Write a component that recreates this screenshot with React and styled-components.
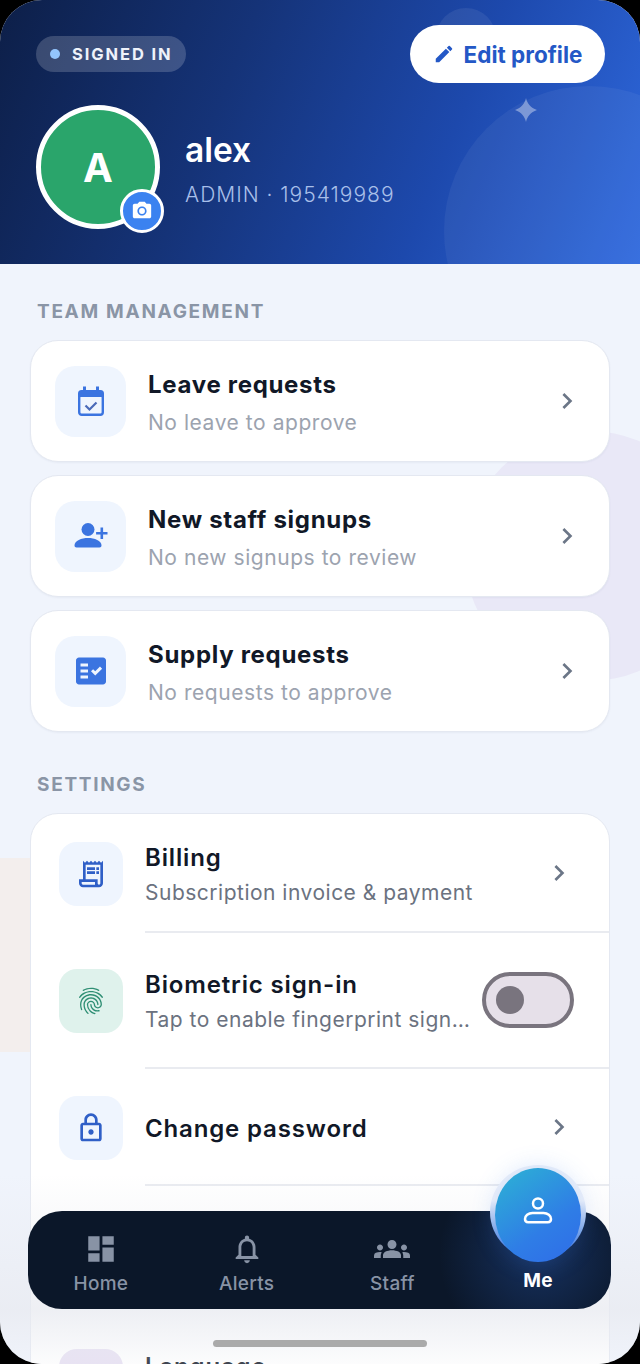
import React from 'react'
import styled, { createGlobalStyle } from 'styled-components'
import {
  MdEdit,
  MdPhotoCamera,
  MdFactCheck,
  MdOutlineReceiptLong,
  MdFingerprint,
  MdOutlineLock,
  MdChevronRight,
  MdDashboard,
  MdOutlineNotifications,
  MdGroups,
} from 'react-icons/md'

const GlobalStyle = createGlobalStyle`
  html, body {
    margin: 0;
    padding: 0;
    background: #000;
  }
  * {
    box-sizing: border-box;
  }
`

const CalendarCheck = () => (
  <svg width="34" height="34" viewBox="0 0 34 34" fill="none">
    <path fill="currentColor" d="M9 2.500h3V6h10V2.500h3V6h1.500A3.500 3.500 0 0 1 30 9.500V13H4V9.500A3.500 3.500 0 0 1 7.500 6H9z" />
    <rect x="5.200" y="11" width="23.600" height="19.800" rx="2.500" stroke="currentColor" strokeWidth="2.400" />
    <path d="M11.500 21.500l4 4 7-7" stroke="#4a6ab8" strokeWidth="2.200" />
  </svg>
)

const PersonAdd = () => (
  <svg width="36" height="36" viewBox="0 0 36 36" fill="currentColor">
    <circle cx="15" cy="11.5" r="6.5" />
    <path d="M1.5 27.5c0-5 7-7.5 13.5-7.5s13.5 2.500 13.500 7.500c0 1.200-.8 2-2 2h-23c-1.200 0-2-.8-2-2z" />
    <path d="M27.500 9.500h2.600v4.400h4.400v2.600h-4.400v4.400h-2.600v-4.400h-4.400v-2.600h4.400z" />
  </svg>
)

const PersonLine = () => (
  <svg width="34" height="34" viewBox="0 0 34 34" fill="none" stroke="currentColor" strokeWidth="2.500">
    <circle cx="17" cy="9.500" r="5" />
    <path d="M11.500 19h11c4.200 0 7.500 2.800 7.500 6 0 2-1.300 3.200-3.200 3.200H7.200C5.300 28.200 4 27 4 25c0-3.200 3.300-6 7.500-6z" />
  </svg>
)

const Sparkle = () => (
  <svg width="24" height="24" viewBox="0 0 24 24" fill="currentColor">
    <path d="M12 0c1.500 6 4.500 9.500 11 12-6.500 2.500-9.500 6-11 12-1.500-6-4.500-9.500-11-12 6.500-2.500 9.500-6 11-12z" />
  </svg>
)

const team = [
  { title: 'Leave requests', sub: 'No leave to approve', icon: <CalendarCheck /> },
  { title: 'New staff signups', sub: 'No new signups to review', icon: <PersonAdd /> },
  { title: 'Supply requests', sub: 'No requests to approve', icon: <MdFactCheck size={36} /> },
]

const App = () => {
  return (
    <Screen>
      <GlobalStyle />
      <Header>
        <HeaderBubble />
        <HeaderDot />
        <HeaderStar><Sparkle /></HeaderStar>
        <TopRow>
          <StatusPill><StatusDot />SIGNED IN</StatusPill>
          <EditButton><MdEdit size={22} />Edit profile</EditButton>
        </TopRow>
        <ProfileRow>
          <Avatar>
            A
            <CameraBadge><MdPhotoCamera size={22} /></CameraBadge>
          </Avatar>
          <ProfileText>
            <ProfileName>alex</ProfileName>
            <ProfileMeta>ADMIN · 195419989</ProfileMeta>
          </ProfileText>
        </ProfileRow>
      </Header>

      <Body>
        <BlobRight />
        <BlobLeft />
        <SectionLabel>TEAM MANAGEMENT</SectionLabel>
        <CardList>
          {team.map((item) => (
            <TeamCard key={item.title}>
              <TeamIcon>{item.icon}</TeamIcon>
              <TeamText>
                <TeamTitle>{item.title}</TeamTitle>
                <TeamSub>{item.sub}</TeamSub>
              </TeamText>
              <Chevron><MdChevronRight size={32} /></Chevron>
            </TeamCard>
          ))}
        </CardList>

        <SectionLabel $settings>SETTINGS</SectionLabel>
        <SettingsCard>
          <SettingsRow $height={119}>
            <SettingsIcon><MdOutlineReceiptLong size={32} /></SettingsIcon>
            <RowBody>
              <RowText>
                <RowTitle>Billing</RowTitle>
                <SettingsSub>Subscription invoice &amp; payment</SettingsSub>
              </RowText>
              <Chevron $settings><MdChevronRight size={32} /></Chevron>
            </RowBody>
          </SettingsRow>
          <SettingsRow $height={136}>
            <SettingsIcon $tone="green"><MdFingerprint size={32} /></SettingsIcon>
            <RowBody>
              <ClippedText>
                <RowTitle>Biometric sign-in</RowTitle>
                <SettingsSub>Tap to enable fingerprint sign-in</SettingsSub>
              </ClippedText>
              <Toggle><ToggleThumb /></Toggle>
            </RowBody>
          </SettingsRow>
          <SettingsRow $height={117}>
            <SettingsIcon><MdOutlineLock size={32} /></SettingsIcon>
            <RowBody>
              <RowText><RowTitle>Change password</RowTitle></RowText>
              <Chevron $settings><MdChevronRight size={32} /></Chevron>
            </RowBody>
          </SettingsRow>
          <SettingsRow $height={136} />
          <SettingsRow $height={118}>
            <SettingsIcon $tone="purple" />
            <RowBody $last>
              <RaisedText><RowTitle>Language</RowTitle></RaisedText>
            </RowBody>
          </SettingsRow>
        </SettingsCard>
      </Body>

      <BottomFade />
      <BottomNav>
        <NavItem><NavIcon><MdDashboard size={34} /></NavIcon>Home</NavItem>
        <NavItem><NavIcon><MdOutlineNotifications size={34} /></NavIcon>Alerts</NavItem>
        <NavItem><NavIcon><MdGroups size={36} /></NavIcon>Staff</NavItem>
        <NavItem $active>
          <MeNotch />
          <MeButton><PersonLine /></MeButton>
          Me
        </NavItem>
      </BottomNav>
      <HomeIndicator />
    </Screen>
  )
}

const Screen = styled.div`
  position: relative;
  width: 640px;
  height: 1364px;
  overflow: hidden;
  border-radius: 42px;
  background: #f0f4fc;
  font-family: Inter, "Liberation Sans", sans-serif;
`

const Header = styled.header`
  position: relative;
  height: 264px;
  padding: 25px 35px 0 36px;
  overflow: hidden;
  background: linear-gradient(112deg, #0d1f48 0%, #153378 35%, #1d49ad 68%, #2f69de 100%);
`

const HeaderBubble = styled.div`
  position: absolute;
  left: 444px;
  top: 86px;
  width: 290px;
  height: 290px;
  border-radius: 50%;
  background: rgba(255, 255, 255, 0.05);
`

const HeaderDot = styled.div`
  position: absolute;
  left: 436px;
  top: 8px;
  width: 60px;
  height: 60px;
  border-radius: 50%;
  background: rgba(255, 255, 255, 0.07);
`

const HeaderStar = styled.div`
  position: absolute;
  left: 514px;
  top: 98px;
  color: rgba(255, 255, 255, 0.38);
  line-height: 0;
`

const TopRow = styled.div`
  position: relative;
  display: flex;
  justify-content: space-between;
  align-items: center;
  height: 58px;
`

const StatusPill = styled.div`
  display: flex;
  align-items: center;
  gap: 12px;
  width: 150px;
  height: 36px;
  padding-left: 14px;
  border-radius: 18px;
  background: rgba(255, 255, 255, 0.18);
  color: #eef2fa;
  font-size: 16.5px;
  font-weight: 700;
  letter-spacing: 1.9px;
  white-space: nowrap;
`

const StatusDot = styled.span`
  width: 10px;
  height: 10px;
  border-radius: 50%;
  background: #93c5fd;
`

const EditButton = styled.div`
  display: flex;
  align-items: center;
  justify-content: center;
  gap: 9px;
  width: 195px;
  height: 58px;
  border-radius: 29px;
  background: #fff;
  color: #2458c6;
  font-size: 22.500px;
  font-weight: 700;
`

const ProfileRow = styled.div`
  position: relative;
  display: flex;
  align-items: center;
  gap: 25px;
  margin-top: 22px;
`

const Avatar = styled.div`
  position: relative;
  display: flex;
  align-items: center;
  justify-content: center;
  width: 124px;
  height: 124px;
  border: 5px solid #fff;
  border-radius: 50%;
  background: #2aa56b;
  color: #fff;
  font-size: 40px;
  font-weight: 700;
`

const CameraBadge = styled.div`
  position: absolute;
  right: -9px;
  bottom: -9px;
  display: flex;
  align-items: center;
  justify-content: center;
  width: 44px;
  height: 44px;
  border: 3px solid #fff;
  border-radius: 50%;
  background: #3b82f0;
`

const ProfileText = styled.div`
  display: flex;
  flex-direction: column;
  gap: 13px;
  margin-top: 5px;
`

const ProfileName = styled.div`
  color: #fff;
  font-size: 33.5px;
  font-weight: 600;
  line-height: 38px;
`

const ProfileMeta = styled.div`
  color: #a8bfe9;
  font-size: 21px;
  font-weight: 300;
  letter-spacing: 1px;
  line-height: 26px;
`

const Body = styled.main`
  position: relative;
  padding: 36px 30px 0;
`

const BlobRight = styled.div`
  position: absolute;
  left: 465px;
  top: 167px;
  width: 250px;
  height: 250px;
  border-radius: 50%;
  background: #e9e8f7;
`

const BlobLeft = styled.div`
  position: absolute;
  left: 0;
  top: 594px;
  width: 40px;
  height: 194px;
  background: #f3eeed;
`

const SectionLabel = styled.div`
  position: relative;
  height: 24px;
  margin: ${(p) => (p.$settings ? '41px 0 16px' : '0 0 16px')};
  padding-left: 7px;
  color: #8a95a6;
  font-size: 19px;
  font-weight: 700;
  letter-spacing: 1.7px;
  line-height: 24px;
`

const CardList = styled.div`
  position: relative;
  display: flex;
  flex-direction: column;
  gap: 13px;
`

const TeamCard = styled.div`
  display: flex;
  align-items: center;
  height: 122px;
  padding-left: 24px;
  border: 1px solid #e4e8f1;
  border-radius: 28px;
  background: #fff;
  box-shadow: 0 1px 2px rgba(30, 50, 100, 0.05);
`

const TeamIcon = styled.div`
  display: flex;
  align-items: center;
  justify-content: center;
  flex-shrink: 0;
  width: 71px;
  height: 71px;
  margin-right: 22px;
  border-radius: 20px;
  background: #eff5fe;
  color: #3b74e0;
`

const RowText = styled.div`
  flex: 1;
  display: flex;
  flex-direction: column;
  gap: 8px;
  min-width: 0;
  padding-top: 4px;
`

const TeamText = styled(RowText)`
  gap: 11px;
`

const ClippedText = styled(RowText)`
  flex: 0 0 326px;
`

const RaisedText = styled(RowText)`
  padding-bottom: 33px;
`

const RowTitle = styled.div`
  color: #111827;
  font-size: 24px;
  font-weight: 600;
  line-height: 28px;
  letter-spacing: 0.85px;
`

const TeamTitle = styled(RowTitle)`
  font-weight: 700;
  letter-spacing: 0.7px;
`

const TeamSub = styled.div`
  color: #9ca3af;
  font-size: 21px;
  line-height: 26px;
  letter-spacing: 0.55px;
`

const SettingsSub = styled.div`
  overflow: hidden;
  color: #6b7280;
  font-size: 21px;
  line-height: 26px;
  letter-spacing: 0.5px;
  white-space: nowrap;
  text-overflow: ellipsis;
`

const Chevron = styled.div`
  display: flex;
  flex-shrink: 0;
  margin-right: ${(p) => (p.$settings ? '34px' : '26px')};
  color: #6b7687;
`

const SettingsCard = styled.div`
  position: relative;
  border: 1px solid #e4e8f1;
  border-radius: 28px;
  background: #fff;
  overflow: hidden;
`

const SettingsRow = styled.div`
  display: flex;
  align-items: center;
  height: ${(p) => p.$height}px;
  padding-left: 28px;
`

const SettingsIcon = styled.div`
  display: flex;
  align-items: center;
  justify-content: center;
  flex-shrink: 0;
  width: 64px;
  height: 64px;
  margin-right: 22px;
  border-radius: 18px;
  background: ${(p) => (p.$tone === 'green' ? '#dff2ec' : p.$tone === 'purple' ? '#e6dff2' : '#eff5fe')};
  color: ${(p) => (p.$tone === 'green' ? '#2f8f74' : '#2f5fc7')};
`

const RowBody = styled.div`
  flex: 1;
  align-self: stretch;
  display: flex;
  align-items: center;
  min-width: 0;
  border-bottom: ${(p) => (p.$last ? 'none' : '2px solid #e9ebf0')};
`

const Toggle = styled.div`
  display: flex;
  align-items: center;
  width: 92px;
  height: 56px;
  margin-left: 11px;
  padding-left: 10px;
  border: 4px solid #79747e;
  border-radius: 28px;
  background: #e6e0e9;
`

const ToggleThumb = styled.div`
  width: 28px;
  height: 28px;
  border-radius: 50%;
  background: #79747e;
`

const BottomFade = styled.div`
  position: absolute;
  left: 0;
  right: 0;
  bottom: 0;
  height: 190px;
  background: linear-gradient(180deg, rgba(235, 238, 245, 0) 0%, rgba(232, 234, 240, 0.75) 72%, rgba(240, 241, 245, 0.2) 100%);
  pointer-events: none;
`

const BottomNav = styled.nav`
  position: absolute;
  left: 28px;
  top: 1211px;
  display: grid;
  grid-template-columns: repeat(4, 1fr);
  width: 583px;
  height: 98px;
  border-radius: 34px;
  background:
    radial-gradient(circle at 511px 44px, rgba(42, 94, 190, 0.36) 0%, rgba(42, 94, 190, 0) 100px),
    #0b1729;
`

const NavItem = styled.div`
  position: relative;
  display: flex;
  flex-direction: column;
  align-items: center;
  justify-content: flex-end;
  padding-bottom: ${(p) => (p.$active ? '16px' : '13px')};
  color: ${(p) => (p.$active ? '#fff' : '#8893a5')};
  font-size: 19px;
  font-weight: ${(p) => (p.$active ? 700 : 500)};
  letter-spacing: 0.3px;
  line-height: 24px;
`

const NavIcon = styled.div`
  display: flex;
  align-items: center;
  justify-content: center;
  height: 38px;
  margin-bottom: 4px;
`

// lighter ring that shows as a small crescent on both sides of the button
const MeNotch = styled.div`
  position: absolute;
  left: 50%;
  top: -46px;
  width: 96px;
  height: 94px;
  margin-left: -48px;
  border-radius: 50%;
  background: linear-gradient(180deg, #eef2fa 0%, #eef2fa 38%, #7ba5e8 72%, #2f6ce8 100%);
`

const MeButton = styled.div`
  position: absolute;
  left: 50%;
  top: -43px;
  display: flex;
  align-items: center;
  justify-content: center;
  width: 86px;
  height: 94px;
  margin-left: -43px;
  padding-bottom: 8px;
  border-radius: 50%;
  background: linear-gradient(145deg, #2cb4d4 0%, #2f7de6 62%, #2f6ce8 100%);
  box-shadow: 0 0 24px rgba(70, 130, 240, 0.22);
  color: #fff;
`

const HomeIndicator = styled.div`
  position: absolute;
  left: 213px;
  top: 1340px;
  width: 214px;
  height: 7px;
  border-radius: 4px;
  background: #aaaaaa;
`

export default App
